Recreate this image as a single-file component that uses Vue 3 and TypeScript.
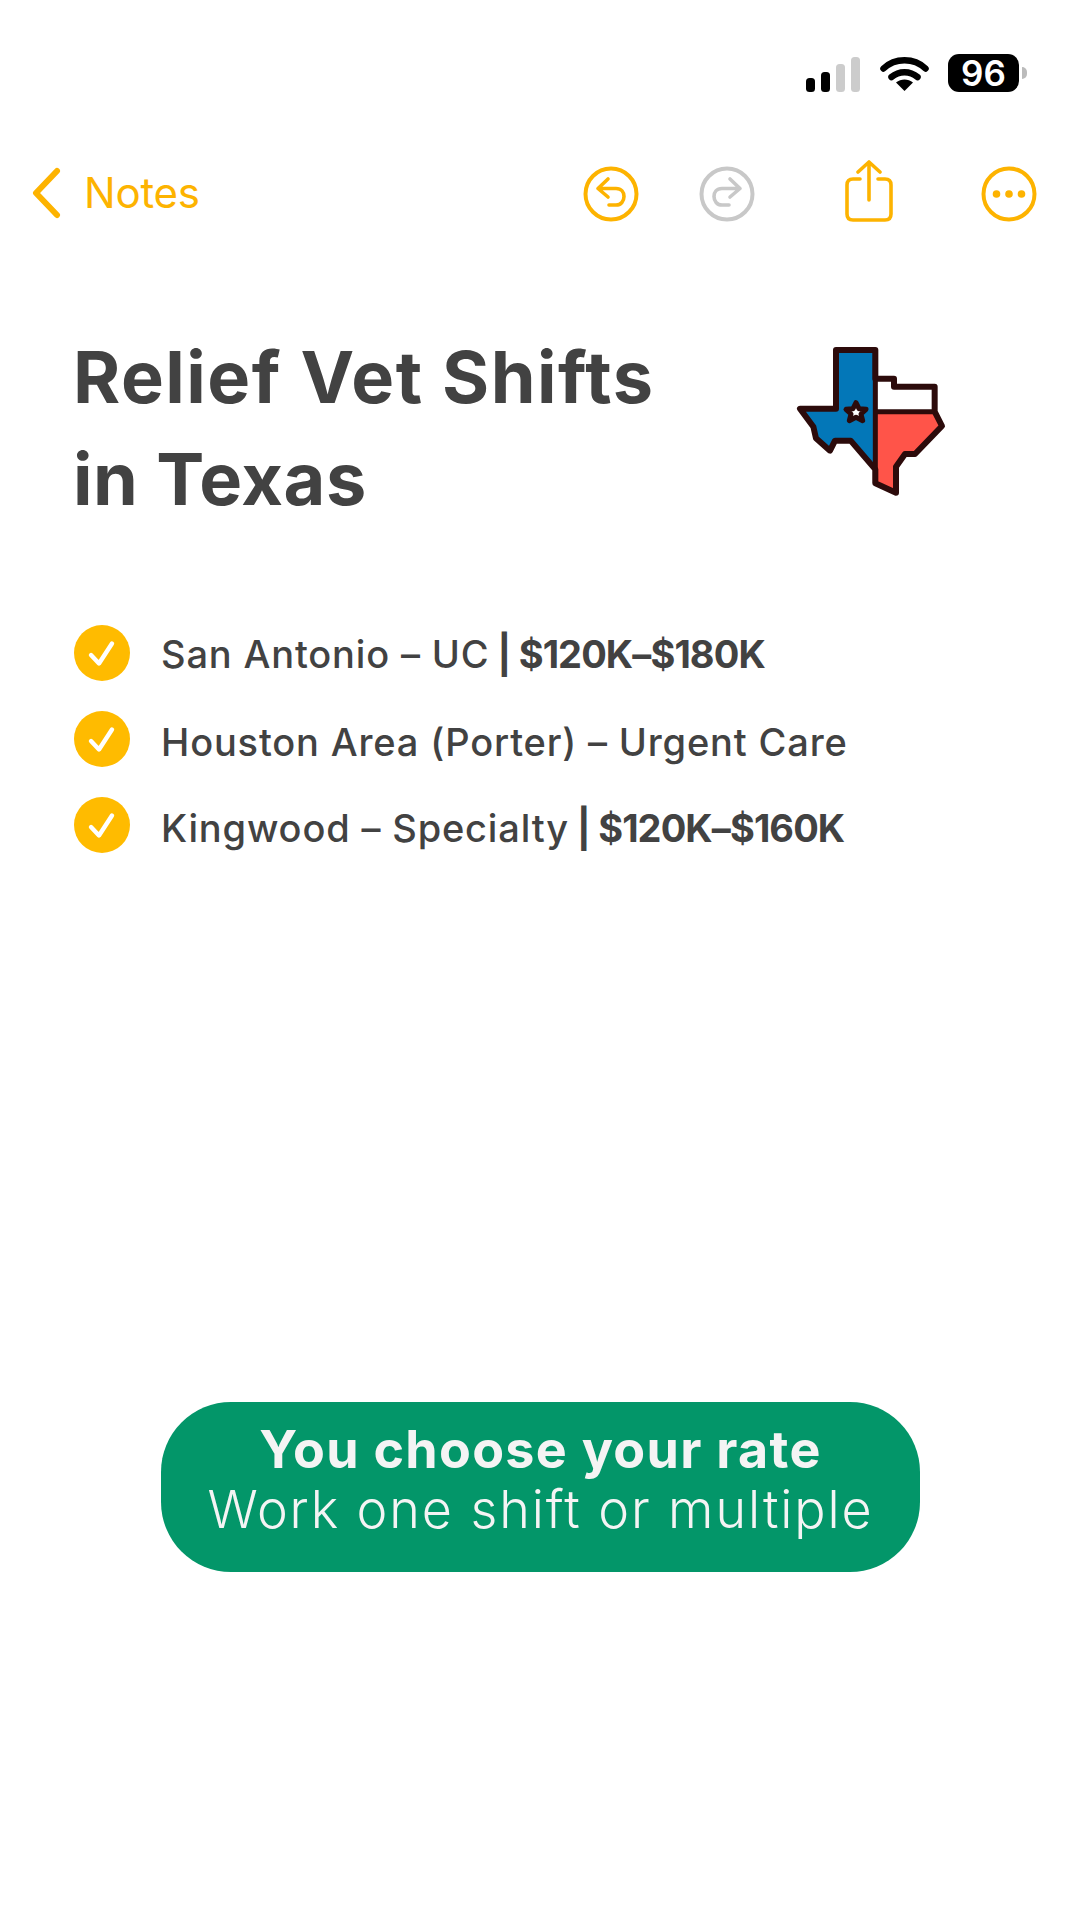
<template>
  <main class="screen">
    <header class="status-bar">
      <svg class="signal" width="54" height="35" viewBox="0 0 54 35" aria-hidden="true">
        <rect x="0" y="21" width="9" height="14" rx="3.5" fill="#000" />
        <rect x="15" y="15" width="9" height="20" rx="3.5" fill="#000" />
        <rect x="30" y="7" width="9" height="28" rx="3.5" fill="#ccc" />
        <rect x="45" y="0" width="9" height="35" rx="3.5" fill="#ccc" />
      </svg>
      <svg class="wifi" width="49" height="36" viewBox="0 0 49 36" aria-hidden="true">
        <path d="M3.5 13.5C15 2.5 34 2.5 45.5 13.5" fill="none" stroke="#000" stroke-width="6.5" stroke-linecap="round" />
        <path d="M11.5 22C19 15.5 30 15.5 37.5 22" fill="none" stroke="#000" stroke-width="6.5" stroke-linecap="round" />
        <path d="M24.5 36L16 27.5C21 23.5 28 23.5 33 27.5Z" fill="#000" />
      </svg>
      <div class="battery">
        <span class="battery-body">96</span>
        <span class="battery-nub" />
      </div>
    </header>

    <nav class="toolbar">
      <div class="back">
        <svg width="32" height="52" viewBox="0 0 32 52" aria-hidden="true">
          <path d="M26 4L5 26L26 48" fill="none" stroke="#fdb300" stroke-width="6" stroke-linecap="round" stroke-linejoin="round" />
        </svg>
        <span class="back-label">Notes</span>
      </div>
      <div class="tools">
        <svg class="tool-undo" width="56" height="56" viewBox="0 0 56 56" aria-hidden="true">
          <circle cx="28" cy="28" r="25.5" fill="none" stroke="#fdb300" stroke-width="4" />
          <path d="M25 13L15 22.5L25 31M15 22.5H33C38.5 22.5 41 26.5 41 30.5C41 35 38 39 33 39H26" fill="none" stroke="#fdb300" stroke-width="3.6" stroke-linecap="round" stroke-linejoin="round" />
        </svg>
        <svg class="tool-redo" width="56" height="56" viewBox="0 0 56 56" aria-hidden="true">
          <circle cx="28" cy="28" r="25.5" fill="none" stroke="#c8c8c8" stroke-width="4" />
          <path d="M31 13L41 22.5L31 31M41 22.5H23C17.5 22.5 15 26.5 15 30.5C15 35 18 39 23 39H30" fill="none" stroke="#c8c8c8" stroke-width="3.6" stroke-linecap="round" stroke-linejoin="round" />
        </svg>
        <svg class="tool-share" width="48" height="62" viewBox="0 0 48 62" aria-hidden="true">
          <path d="M15 19H8C4 19 2 21 2 25V54C2 58 4 60 8 60H40C44 60 46 58 46 54V25C46 21 44 19 40 19H33" fill="none" stroke="#fdb300" stroke-width="3.6" stroke-linecap="round" />
          <path d="M24 40V2M13 12L24 2L35 12" fill="none" stroke="#fdb300" stroke-width="3.6" stroke-linecap="round" stroke-linejoin="round" />
        </svg>
        <svg class="tool-more" width="56" height="56" viewBox="0 0 56 56" aria-hidden="true">
          <circle cx="28" cy="28" r="25.5" fill="none" stroke="#fdb300" stroke-width="4" />
          <circle cx="15.5" cy="28" r="3.8" fill="#fdb300" />
          <circle cx="28" cy="28" r="3.8" fill="#fdb300" />
          <circle cx="40.5" cy="28" r="3.8" fill="#fdb300" />
        </svg>
      </div>
    </nav>

    <section class="heading">
      <h1 class="title">Relief Vet Shifts<br /><span class="title-tight">in Texas</span></h1>
      <svg class="texas" width="180" height="180" viewBox="0 0 540 540" aria-hidden="true">
        <path d="M168 60H286V460V418L212 332H165L150 362L108 325L100 290L60 236H168Z" fill="#0377b8" />
        <path d="M286 146H342V170H464V245H286Z" fill="#fff" />
        <path d="M286 245H464L486 288L405 372H375L348 410V488L286 460Z" fill="#ff5449" />
        <path
          d="M168 60H286V146H342V170H464V245L486 288L405 372H375L348 410V488L286 460V418L212 332H165L150 362L108 325L100 290L60 236H168Z"
          fill="none"
          stroke="#2c0b0b"
          stroke-width="18"
          stroke-linejoin="round"
        />
        <path d="M286 60V460M286 245H464" fill="none" stroke="#2c0b0b" stroke-width="15" />
        <path d="M228 218L237 236L258 238L243 252L248 272L228 262L208 272L213 252L198 238L219 236Z" fill="#fff" stroke="#2c0b0b" stroke-width="15" stroke-linejoin="round" />
      </svg>
    </section>

    <ul class="shifts">
      <li v-for="shift in shifts" :key="shift.label" class="shift">
        <span class="check">
          <svg width="56" height="56" viewBox="0 0 56 56" aria-hidden="true">
            <circle cx="28" cy="28" r="28" fill="#ffbb00" />
            <path d="M17 30L25 38.5L38 18.5" fill="none" stroke="#fff" stroke-width="4.4" stroke-linecap="round" stroke-linejoin="round" />
          </svg>
        </span>
        <span class="shift-text">{{ shift.label }}<b v-if="shift.pay">{{ shift.pay }}</b></span>
      </li>
    </ul>

    <div class="cta">
      <strong class="cta-main">You choose your rate</strong>
      <span class="cta-sub">Work one shift or multiple</span>
    </div>
  </main>
</template>

<script setup lang="ts">
interface Shift {
  label: string
  pay?: string
}

const shifts: Shift[] = [
  { label: 'San Antonio – UC ', pay: '| $120K–$180K' },
  { label: 'Houston Area (Porter) – Urgent Care' },
  { label: 'Kingwood – Specialty ', pay: '| $120K–$160K' },
]
</script>

<style scoped>
.screen {
  box-sizing: border-box;
  width: 1080px;
  height: 1920px;
  background: #fff;
  font-family: Inter, "Liberation Sans", sans-serif;
  color: #424242;
  overflow: hidden;
}

.status-bar {
  display: flex;
  align-items: center;
  height: 38px;
  padding: 54px 53px 0 806px;
}

.signal {
  flex-shrink: 0;
  margin-top: 2px;
}

.wifi {
  flex-shrink: 0;
  margin-left: 20px;
}

.battery {
  display: flex;
  align-items: center;
  margin-left: 19px;
}

.battery-body {
  width: 71px;
  height: 38px;
  border-radius: 11px;
  background: #000;
  color: #fff;
  font-size: 35px;
  font-weight: 600;
  line-height: 38px;
  text-align: center;
}

.battery-nub {
  width: 5px;
  height: 12px;
  margin-left: 3px;
  border-radius: 0 6px 6px 0;
  background: #bbb;
}

.toolbar {
  display: flex;
  align-items: center;
  justify-content: space-between;
  height: 62px;
  margin-top: 70px;
  padding: 0 43px 0 31px;
}

.back {
  display: flex;
  align-items: center;
  gap: 21px;
}

.back-label {
  color: #fdb300;
  font-size: 42px;
  letter-spacing: -0.2px;
  line-height: 52px;
}

.tools {
  display: flex;
  align-items: center;
  padding-top: 1px;
}

.tool-redo {
  margin-left: 60px;
}

.tool-share {
  margin-bottom: 5px;
  margin-left: 90px;
}

.tool-more {
  margin-left: 88px;
}

.heading {
  display: flex;
  justify-content: space-between;
  margin-top: 102px;
  padding: 0 120px 0 73px;
}

.title {
  margin: 0;
  font-size: 72px;
  font-weight: 700;
  letter-spacing: 1.5px;
  line-height: 102px;
}

.title-tight {
  letter-spacing: 0.6px;
}

.texas {
  flex-shrink: 0;
  margin-top: 4px;
}

.shifts {
  display: flex;
  flex-direction: column;
  gap: 30px;
  margin: 95px 0 0;
  padding: 0 0 0 74px;
  list-style: none;
}

.shift {
  display: flex;
  align-items: center;
  gap: 31px;
  height: 56px;
}

.check {
  display: flex;
  flex-shrink: 0;
}

.shift-text {
  padding-top: 6px;
  font-size: 38px;
  font-weight: 500;
  letter-spacing: 0.83px;
  white-space: pre;
}

.shift:first-child .shift-text {
  padding-top: 1px;
}

.shift-text b {
  margin-left: -3px;
  font-weight: 700;
  letter-spacing: -0.9px;
}

.cta {
  display: flex;
  flex-direction: column;
  align-items: center;
  justify-content: center;
  box-sizing: border-box;
  width: 759px;
  height: 170px;
  margin: 549px 0 0 161px;
  padding-bottom: 15px;
  border-radius: 70px;
  background: #039669;
  color: #f4f4f4;
}

.cta-main {
  font-size: 52px;
  font-weight: 700;
  letter-spacing: 1.3px;
  line-height: 60px;
}

.cta-sub {
  font-size: 52px;
  font-weight: 300;
  letter-spacing: 1.9px;
  line-height: 60px;
}
</style>

<style>
body {
  background: #fff;
}
</style>
